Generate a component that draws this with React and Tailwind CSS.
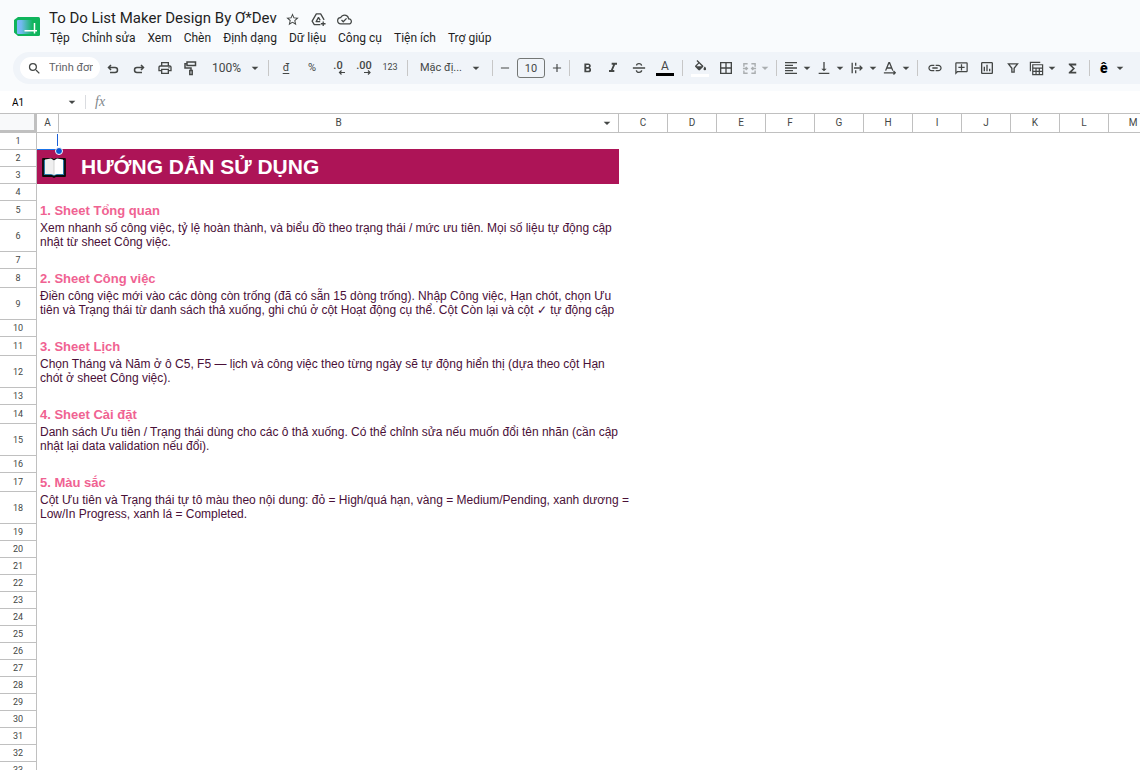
import React from "react";
import {
  MdStarOutline, MdOutlineCloudDone, MdSearch, MdOutlinePrint,
  MdArrowDropDown, MdRemove, MdAdd, MdFormatBold, MdFormatItalic,
  MdBorderAll, MdFormatAlignLeft, MdVerticalAlignBottom, MdLink, MdOutlineAddComment,
  MdOutlineInsertChart, MdFunctions,
} from "react-icons/md";

const MENUS = ["Tệp", "Chỉnh sửa", "Xem", "Chèn", "Định dạng", "Dữ liệu", "Công cụ", "Tiện ích", "Trợ giúp"];
const COLUMNS = ["C", "D", "E", "F", "G", "H", "I", "J", "K", "L", "M"];

const HEADINGS = {
  5: "1. Sheet Tổng quan",
  8: "2. Sheet Công việc",
  11: "3. Sheet Lịch",
  14: "4. Sheet Cài đặt",
  17: "5. Màu sắc",
};

const PARAGRAPHS = {
  6: "Xem nhanh số công việc, tỷ lệ hoàn thành, và biểu đồ theo trạng thái / mức ưu tiên. Mọi số liệu tự động cập\nnhật từ sheet Công việc.",
  9: "Điền công việc mới vào các dòng còn trống (đã có sẵn 15 dòng trống). Nhập Công việc, Hạn chót, chọn Ưu\ntiên và Trạng thái từ danh sách thả xuống, ghi chú ở cột Hoạt động cụ thể. Cột Còn lại và cột ✓ tự động cập",
  12: "Chọn Tháng và Năm ở ô C5, F5 — lịch và công việc theo từng ngày sẽ tự động hiển thị (dựa theo cột Hạn\nchót ở sheet Công việc).",
  15: "Danh sách Ưu tiên / Trạng thái dùng cho các ô thả xuống. Có thể chỉnh sửa nếu muốn đổi tên nhãn (cần cập\nnhật lại data validation nếu đổi).",
  18: "Cột Ưu tiên và Trạng thái tự tô màu theo nội dung: đỏ = High/quá hạn, vàng = Medium/Pending, xanh dương =\nLow/In Progress, xanh lá = Completed.",
};

function Svg({ children, size = 16, ...rest }) {
  return (
    <svg width={size} height={size} viewBox="0 0 16 16" fill="none" stroke="currentColor" strokeWidth="1.5" aria-hidden="true" {...rest}>
      {children}
    </svg>
  );
}

function Logo() {
  return (
    <svg width="27" height="20" viewBox="0 0 27 20" aria-hidden="true">
      <defs>
        <linearGradient id="logo" x1="0" x2="1">
          <stop offset="0" stopColor="#7db8fb" />
          <stop offset="0.2" stopColor="#72b9f0" />
          <stop offset="0.75" stopColor="#10b55d" />
        </linearGradient>
      </defs>
      <path d="M4 0h20.500a1.500 1.500 0 0 1 1.500 1.500v16a1.500 1.500 0 0 1-1.500 1.500H4L0 15.500V3z" fill="#0fb45c" />
      <rect x="3" y="3" width="21" height="14" rx="1" fill="url(#logo)" />
      <path d="M10.500 13.700h12.500M20.500 6v10.500" stroke="#fff" strokeWidth="1.500" fill="none" />
    </svg>
  );
}

function Book() {
  return (
    <svg width="24" height="21" viewBox="0 0 24 21" aria-hidden="true">
      <path d="M1 2h9l2 1 2-1h9v17h-9l-2 1-2-1H1z" fill="#2a7ba8" stroke="#0a0a0a" strokeWidth="1.800" strokeLinejoin="round" />
      <path d="M3 2.500 9 1.500l3 2V18l-3-1H3z" fill="#efefef" />
      <path d="M21 2.500 15 1.500l-3 2V18l3-1h6z" fill="#fff" />
      <path d="M12 4v14" stroke="#c9c9c9" strokeWidth="0.800" />
    </svg>
  );
}

function Tool({ label, children }) {
  return (
    <button type="button" aria-label={label} className="flex h-7 w-[26px] shrink-0 items-center justify-center">
      {children}
    </button>
  );
}

function MenuTool({ label, children, disabled }) {
  return (
    <button type="button" aria-label={label} disabled={disabled} className="flex h-7 w-[33px] shrink-0 items-center disabled:opacity-40">
      <span className="flex w-5 items-center justify-center">{children}</span>
      <MdArrowDropDown size={16} className="-mx-0.5 shrink-0" />
    </button>
  );
}

function Divider() {
  return <span className="mx-1 h-4 w-px shrink-0 bg-[#c7c7c7]" />;
}

function Toolbar() {
  return (
    <div className="ml-[13px] flex h-8 items-center overflow-hidden rounded-l-full bg-[#f0f4f9] pl-[7px] text-[#444746]">
      <label className="flex h-[22px] w-20 shrink-0 items-center gap-[7px] rounded-full bg-white px-[7px]">
        <MdSearch size={15} className="shrink-0" />
        <input aria-label="Trình đơn" placeholder="Trình đơn" className="w-full min-w-0 bg-transparent font-[Roboto,sans-serif] text-[11px] outline-none placeholder:text-[#5f6368]" />
      </label>
      <Tool label="Hủy">
        <Svg><path d="M6 5 3.500 7.500 6 10M3.500 7.500h6.500a2.500 2.500 0 0 1 0 5H5" /></Svg>
      </Tool>
      <Tool label="Làm lại">
        <Svg><path d="m10 5 2.500 2.500L10 10M12.500 7.500H6a2.500 2.500 0 0 0 0 5h5" /></Svg>
      </Tool>
      <Tool label="In"><MdOutlinePrint size={16} /></Tool>
      <Tool label="Sao chép định dạng">
        <Svg><path d="M4 2h8.500v3.500H4zM4 3.700H2V8h6v2.500M6.800 10.500h2.400v4H6.800z" /></Svg>
      </Tool>
      <button type="button" className="flex w-[60px] shrink-0 items-center justify-between pr-px pl-2 text-xs">
        100%<MdArrowDropDown size={16} />
      </button>
      <Divider />
      <Tool label="Tiền tệ"><span className="text-[11px] underline underline-offset-2">đ</span></Tool>
      <Tool label="Phần trăm"><span className="text-[11px]">%</span></Tool>
      <Tool label="Giảm số thập phân">
        <span className="flex flex-col items-center">
          <span className="text-[11px] leading-[10px] font-medium">.0</span>
          <svg width="14" height="5" viewBox="0 0 14 5" fill="none" stroke="currentColor" strokeWidth="1.200" className="-mt-px" aria-hidden="true"><path d="M14 2.500H8.500M10.500.5l-2 2 2 2" /></svg>
        </span>
      </Tool>
      <Tool label="Tăng số thập phân">
        <span className="flex flex-col items-center">
          <span className="text-[11px] leading-[10px] font-medium">.00</span>
          <svg width="14" height="5" viewBox="0 0 14 5" fill="none" stroke="currentColor" strokeWidth="1.200" className="-mt-px" aria-hidden="true"><path d="M7 2.500h6M11 .5l2 2-2 2" /></svg>
        </span>
      </Tool>
      <Tool label="Định dạng số"><span className="text-[9px]">123</span></Tool>
      <Divider />
      <button type="button" className="flex w-[76px] shrink-0 items-center justify-between pr-1 pl-2 text-[11px]">
        Mặc đị...<MdArrowDropDown size={16} />
      </button>
      <Divider />
      <button type="button" aria-label="Giảm cỡ chữ" className="flex w-4 shrink-0 justify-center"><MdRemove size={14} /></button>
      <input aria-label="Cỡ chữ" defaultValue="10" className="mx-1 h-5 w-7 shrink-0 rounded-[3px] border border-[#747775] bg-transparent text-center text-[11px]" />
      <button type="button" aria-label="Tăng cỡ chữ" className="flex w-4 shrink-0 justify-center"><MdAdd size={14} /></button>
      <Divider />
      <Tool label="In đậm"><MdFormatBold size={15} /></Tool>
      <Tool label="In nghiêng"><MdFormatItalic size={16} /></Tool>
      <Tool label="Gạch ngang"><Svg size={14}><path d="M1 8h14M11 5.300C10.800 3.700 9.600 3 8 3S5.200 3.800 5.200 5.200M5 10.500c.1 1.700 1.400 2.500 3 2.500s3-.8 3-2.300" /></Svg></Tool>
      <Tool label="Màu văn bản">
        <span className="flex flex-col items-center">
          <span className="text-xs leading-[13px]">A</span>
          <span className="h-[3px] w-[18px] bg-black" />
        </span>
      </Tool>
      <Divider />
      <Tool label="Màu nền">
        <span className="flex flex-col items-center">
          <svg width="14" height="14" viewBox="0 0 16 16" aria-hidden="true" fill="currentColor">
            <path fillRule="evenodd" d="m5 0 6.500 6.200c.6.600.6 1.200 0 1.800L8 11.500c-.6.600-1.300.6-1.900 0L2.700 8.100c-.6-.6-.6-1.200 0-1.800L6 3 4 1zm2 4L4 7h6z" />
            <path d="M13.500 7.500s1.500 1.700 1.500 2.800a1.500 1.500 0 0 1-3 0c0-1.100 1.500-2.800 1.500-2.800z" />
          </svg>
          <span className="h-[3px] w-[18px] bg-white" />
        </span>
      </Tool>
      <Tool label="Đường viền"><MdBorderAll size={16} /></Tool>
      <MenuTool label="Hợp nhất ô" disabled>
        <Svg size={15}><path d="M2 6V3h4M10 3h4v3M2 10v3h4M10 13h4v-3M1 8h4.500M15 8h-4.500M4 6.300 5.700 8 4 9.700M12 6.300 10.300 8 12 9.700" /></Svg>
      </MenuTool>
      <Divider />
      <MenuTool label="Căn ngang"><MdFormatAlignLeft size={16} /></MenuTool>
      <MenuTool label="Căn dọc"><MdVerticalAlignBottom size={16} /></MenuTool>
      <MenuTool label="Xuống dòng"><Svg size={14}><path d="M2.500 2v12M6.500 2v3.500M6.500 10.500V14M4.500 8h9M11 5.300 13.700 8 11 10.700" /></Svg></MenuTool>
      <MenuTool label="Xoay văn bản"><Svg size={14}><path d="M3 11 6.700 2h.8l3.700 9M4.300 8h5.600M1 13.500h13M12 11.500l2 2-2 2" /></Svg></MenuTool>
      <Divider />
      <Tool label="Chèn đường liên kết"><MdLink size={16} /></Tool>
      <Tool label="Chèn nhận xét"><MdOutlineAddComment size={15} className="-scale-x-100" /></Tool>
      <Tool label="Chèn biểu đồ"><MdOutlineInsertChart size={16} /></Tool>
      <Tool label="Bộ lọc"><Svg size={12} strokeWidth="1.800"><path d="M2 2.500h12L9.500 8.300v5.200h-3V8.300z" /></Svg></Tool>
      <MenuTool label="Chế độ xem bảng">
        <Svg size={15}><path d="M1.500 11V1.500H12M4 4h10.500v10.500H4zM4 7.500h10.500M4 11h10.500M7.500 7.500v7M11 7.500v7" strokeWidth="1.300" /></Svg>
      </MenuTool>
      <Tool label="Hàm"><MdFunctions size={15} /></Tool>
      <Divider />
      <button type="button" aria-label="Công cụ nhập" className="flex shrink-0 items-center gap-1 pl-1.5">
        <span className="text-sm leading-4 font-black text-black">ê</span>
        <MdArrowDropDown size={16} />
      </button>
    </div>
  );
}

function SheetRow({ n }) {
  const heading = HEADINGS[n];
  const paragraph = PARAGRAPHS[n];
  let content;
  if (n === 1) {
    content = (
      <>
        <td className="relative border-b border-[#ad1457]">
          <span className="absolute top-px right-px h-3 w-px bg-[#1a5fd8]" />
          <span className="absolute -bottom-px left-0 h-px w-[18px] bg-[#1a73e8]" />
          <span className="absolute -right-1 -bottom-[6px] z-10 size-2 rounded-full border border-white bg-[#0b57d0]" />
        </td>
        <td className="border-b border-[#ad1457]" />
      </>
    );
  } else if (n === 2) {
    content = (
      <td colSpan={2} rowSpan={2} className="bg-[#ad1457]">
        <div className="flex items-center gap-[15px] pl-[5px] text-[21px] leading-[34px] font-bold text-white">
          <Book />
          HƯỚNG DẪN SỬ DỤNG
        </div>
      </td>
    );
  } else if (heading) {
    content = (
      <td colSpan={2} className="pl-[3px] text-[13px] leading-[18px] font-bold text-[#f06292]">{heading}</td>
    );
  } else if (paragraph) {
    content = (
      <td colSpan={2} className="pb-0.5 pl-[3px] text-xs leading-[14px] whitespace-pre text-[#4a1038]">{paragraph}</td>
    );
  } else if (n !== 3) {
    content = (<><td /><td /></>);
  }
  return (
    <tr className={paragraph ? "h-8" : heading ? "h-[19px]" : "h-[17px]"}>
      <th scope="row" className="border-r border-b border-[#c0c0c0] font-[Roboto,sans-serif] text-[9px] leading-3 font-normal text-[#444746]">{n}</th>
      {content}
      {COLUMNS.map((c) => <td key={c} />)}
    </tr>
  );
}

export default function App() {
  const head = "border-r border-b border-[#c0c0c0] font-normal";
  return (
    <div className="flex h-screen flex-col overflow-hidden bg-[#f9fbfd] font-[Roboto,'Noto_Sans',sans-serif] text-[#1f1f1f]">
      <header className="flex items-start gap-2 pt-2 pl-[14px]">
        <a href="#" aria-label="Trang tính" className="pt-[9px]"><Logo /></a>
        <div>
          <div className="flex h-5 items-center gap-2">
            <h1 className="text-[15px] leading-5">To Do List Maker Design By Ơ*Dev</h1>
            <div className="flex items-center gap-[11px] pt-0.5 text-[#444746]">
              <button type="button" aria-label="Gắn dấu sao"><MdStarOutline size={15} /></button>
              <button type="button" aria-label="Di chuyển">
                <Svg size={15} strokeWidth="1.400" strokeLinejoin="round"><path d="M10 13.500H3.500L1.200 9.800 5.700 2h4.600l3.700 6.400M8 5.800 5.500 10.200h4.300M8 5.800l1.800 3.200M13 10v5M10.500 12.500h5" /></Svg>
              </button>
              <button type="button" aria-label="Trạng thái tài liệu"><MdOutlineCloudDone size={15} /></button>
            </div>
          </div>
          <nav className="flex h-[19px] items-center gap-3 pl-px text-xs">
            {MENUS.map((m) => <button type="button" key={m}>{m}</button>)}
          </nav>
        </div>
      </header>
      <div className="pt-[5px] pb-[7px]"><Toolbar /></div>
      <div className="flex h-[23px] shrink-0 items-center border-b border-[#c0c0c0] bg-white pl-3">
        <input aria-label="Hộp tên" defaultValue="A1" className="w-[52px] bg-transparent text-[10px] text-black" />
        <MdArrowDropDown size={16} className="text-[#444746]" />
        <span className="mx-[5px] h-3.5 w-px bg-[#dadce0]" />
        <label htmlFor="formula" className="w-6 pl-1 font-['Liberation_Serif',serif] text-sm leading-4 text-[#80868b] italic">fx</label>
        <input id="formula" className="min-w-0 flex-1 bg-transparent text-xs" />
      </div>
      <main className="min-h-0 flex-1 overflow-hidden bg-white font-['Liberation_Sans',sans-serif]">
        <table className="w-[1158px] table-fixed border-separate border-spacing-0">
          <colgroup>
            <col className="w-[37px]" />
            <col className="w-[22px]" />
            <col className="w-[560px]" />
            {COLUMNS.map((c) => <col key={c} className="w-[49px]" />)}
          </colgroup>
          <thead>
            <tr className="h-[19px] font-[Roboto,sans-serif] text-[10px] leading-3 text-[#444746]">
              <td className="border-r-3 border-b-3 border-[#c0c0c0] bg-[#f8f9fa]" />
              <th scope="col" className={head}>A</th>
              <th scope="col" className={head}>
                <span className="flex items-center">
                  <span className="flex-1 pl-[19px]">B</span>
                  <MdArrowDropDown size={16} className="-my-1 mr-[3px]" />
                </span>
              </th>
              {COLUMNS.map((c) => <th key={c} scope="col" className={head}>{c}</th>)}
            </tr>
          </thead>
          <tbody>
            {Array.from({ length: 33 }, (_, i) => <SheetRow key={i} n={i + 1} />)}
          </tbody>
        </table>
      </main>
    </div>
  );
}
